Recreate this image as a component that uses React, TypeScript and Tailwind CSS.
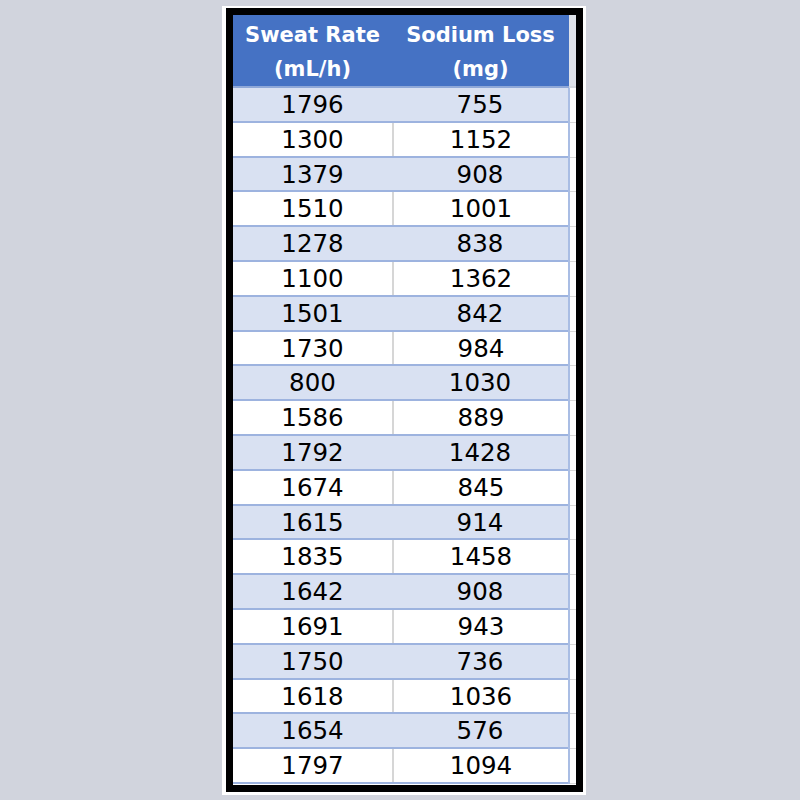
const rows: [number, number][] = [
  [1796, 755],
  [1300, 1152],
  [1379, 908],
  [1510, 1001],
  [1278, 838],
  [1100, 1362],
  [1501, 842],
  [1730, 984],
  [800, 1030],
  [1586, 889],
  [1792, 1428],
  [1674, 845],
  [1615, 914],
  [1835, 1458],
  [1642, 908],
  [1691, 943],
  [1750, 736],
  [1618, 1036],
  [1654, 576],
  [1797, 1094],
];

export default function App() {
  return (
    <div className="w-[800px] h-[800px] bg-[#d1d4dd] flex pl-[222px] pt-[6px] font-['DejaVu_Sans',sans-serif]">
      <div className="w-[364px] h-[789px] bg-white pl-[4px] pr-[3px] pt-[2px] pb-[3px]">
        <div className="h-full border-[7px] border-black flex flex-col bg-white">
          {/* Header */}
          <div className="flex h-[73px] shrink-0">
            <div className="w-[336px] bg-[#4572c4] border-b-2 border-[#8fa8d8] flex text-white font-bold text-[21px] leading-[34px]">
              <div className="w-[159px] flex flex-col items-center justify-center pt-[2px]">
                <span>Sweat Rate</span>
                <span>(mL/h)</span>
              </div>
              <div className="w-[177px] flex flex-col items-center justify-center pt-[2px]">
                <span>Sodium Loss</span>
                <span>(mg)</span>
              </div>
            </div>
            <div className="flex-1 bg-[#dfe2ea] border-b-2 border-[#d4d7de]" />
          </div>

          {/* Rows */}
          {rows.map(([rate, sodium], i) => {
            const shaded = i % 2 === 0;
            return (
              <div key={i} className="flex h-[34.8px] shrink-0 text-[24.5px] text-black">
                <div
                  className={
                    shaded
                      ? 'w-[335px] flex bg-[#d9e1f2] border-b-2 border-[#9db3df]'
                      : 'w-[335px] flex bg-white border-b-2 border-[#9db3df]'
                  }
                >
                  <div className="w-[159px] flex items-center justify-center pt-[2px]">{rate}</div>
                  <div
                    className={
                      shaded
                        ? 'w-[176px] flex items-center justify-center pt-[2px]'
                        : 'w-[176px] flex items-center justify-center pt-[2px] border-l-2 border-[#d6d6d6]'
                    }
                  >
                    {sodium}
                  </div>
                </div>
                <div className="w-[2px] bg-[#a9bde4]" />
                <div className="flex-1 bg-white border-b border-[#d9d9d9]" />
              </div>
            );
          })}
        </div>
      </div>
    </div>
  );
}
